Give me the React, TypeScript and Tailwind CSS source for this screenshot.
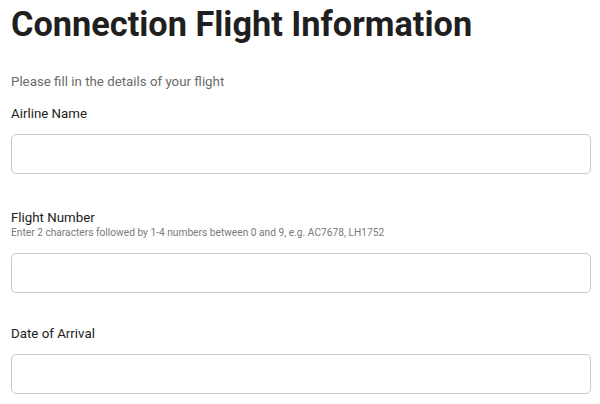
import React from 'react';

const font = { fontFamily: 'Roboto, "Liberation Sans", sans-serif' };

const ConnectionFlightForm: React.FC = () => {
  return (
    <div className="min-h-screen bg-white pt-[4px] pl-[11px] pr-[9px] text-[#212121]" style={font}>
      <h1 className="text-[34.3px] leading-[40px] font-bold text-[#1f1f1f]">
        Connection Flight Information
      </h1>
      <p className="mt-[28px] text-[13.3px] leading-[20px] text-[#6b6b6b]">
        Please fill in the details of your flight
      </p>

      {/* Airline */}
      <label className="mt-[12px] block text-[13.3px] leading-[20px]">Airline Name</label>
      <input
        type="text"
        className="mt-[10px] block h-[40px] w-full rounded-[5px] border border-[#c8c8c8] bg-white px-3 text-[14px] outline-none"
      />

      {/* Flight number */}
      <label className="mt-[36px] block text-[13.3px] leading-[16px]">Flight Number</label>
      <p className="text-[10.2px] leading-[14px] text-[#7a7a7a]">
        Enter 2 characters followed by 1-4 numbers between 0 and 9, e.g. AC7678, LH1752
      </p>
      <input
        type="text"
        className="mt-[13px] block h-[40px] w-full rounded-[5px] border border-[#c8c8c8] bg-white px-3 text-[14px] outline-none"
      />

      {/* Date */}
      <label className="mt-[31px] block text-[13.3px] leading-[20px]">Date of Arrival</label>
      <input
        type="text"
        className="mt-[10px] block h-[40px] w-full rounded-[5px] border border-[#c8c8c8] bg-white px-3 text-[14px] outline-none"
      />
    </div>
  );
};

export default function App() {
  return <ConnectionFlightForm />;
}
